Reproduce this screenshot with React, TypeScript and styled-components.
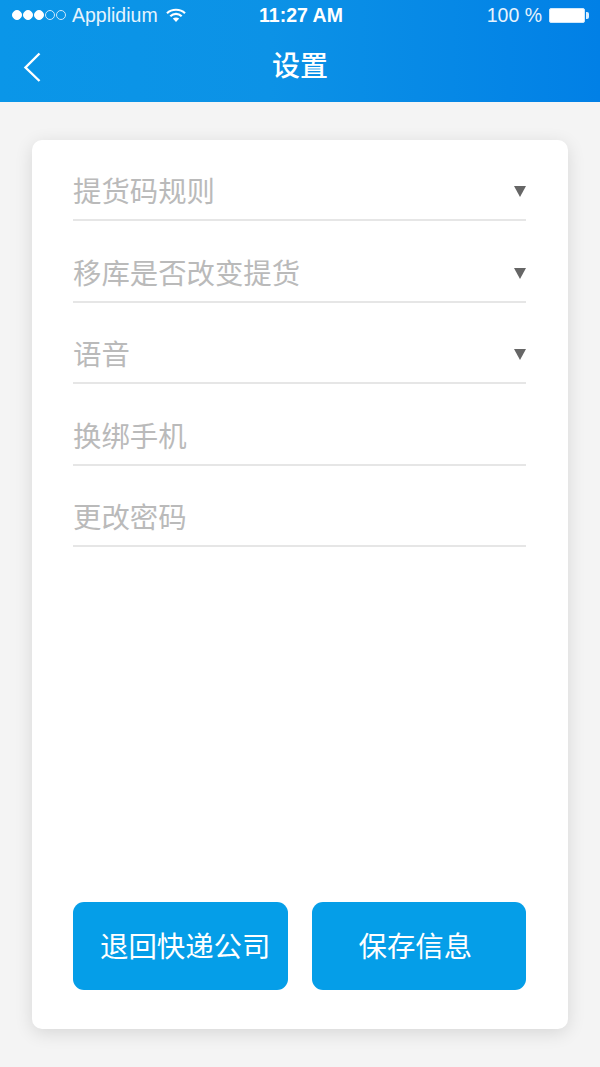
import styled, { createGlobalStyle } from "styled-components";

const GlobalStyle = createGlobalStyle`
  html, body {
    margin: 0;
    padding: 0;
    background: #f4f4f4;
  }
  * {
    box-sizing: border-box;
  }
`;

const fields = [
  { label: "提货码规则", select: true },
  { label: "移库是否改变提货", select: true },
  { label: "语音", select: true },
  { label: "换绑手机", select: false },
  { label: "更改密码", select: false },
];

const App = () => {
  return (
    <>
      <GlobalStyle />
      <Page>
        <Header>
          <StatusBar>
            <StatusLeft>
              <Dots>
                {[true, true, true, false, false].map((on, i) => (
                  <Dot key={i} $on={on} />
                ))}
              </Dots>
              <span>Applidium</span>
              <svg width="20" height="14" viewBox="0 0 20 14" fill="none" stroke="#fff">
                <path d="M1 5.2 C5.8 0.6 14.2 0.6 19 5.2" strokeWidth="2.2" />
                <path d="M4.3 8.2 C7.6 5 12.4 5 15.7 8.2" strokeWidth="2.2" />
                <path d="M10 14 L6.8 10.6 C8.6 9.2 11.4 9.2 13.2 10.6 Z" fill="#fff" stroke="none" />
              </svg>
            </StatusLeft>
            <Clock>11:27 AM</Clock>
            <StatusRight>
              <span>100 %</span>
              <Battery />
            </StatusRight>
          </StatusBar>
          <NavBar>
            <BackIcon width="18" height="30" viewBox="0 0 18 30" fill="none" stroke="#fff" strokeWidth="2.4">
              <path d="M16.5 1.5 L2.5 15.5 L16.5 29" />
            </BackIcon>
            <Title>设置</Title>
          </NavBar>
        </Header>
        <Card>
          <FieldList>
            {fields.map((f) => (
              <Field key={f.label}>
                <FieldLabel>{f.label}</FieldLabel>
                {f.select && <Caret />}
              </Field>
            ))}
          </FieldList>
          <Actions>
            <ActionButton $inset={27}>退回快递公司</ActionButton>
            <ActionButton $inset={47}>保存信息</ActionButton>
          </Actions>
        </Card>
      </Page>
    </>
  );
};

const cjk = `"Noto Sans CJK SC", "Noto Sans", sans-serif`;

const Page = styled.div`
  width: 600px;
  height: 1067px;
  overflow: hidden;
  background: #f4f4f4;
  display: flex;
  flex-direction: column;
`;

const Header = styled.header`
  height: 102px;
  background: linear-gradient(90deg, #0a96e8 0%, #0c92e6 45%, #0180e6 100%);
  color: #fff;
`;

const StatusBar = styled.div`
  height: 30px;
  padding: 0 12px;
  display: grid;
  grid-template-columns: 1fr auto 1fr;
  align-items: center;
  font-family: "Liberation Sans", Arial, sans-serif;
  font-size: 19.5px;
  color: #e6f3fd;
`;

const StatusLeft = styled.div`
  display: flex;
  align-items: center;
  gap: 6px;

  svg {
    margin-left: 2px;
  }
`;

const Dots = styled.div`
  display: flex;
  gap: 1px;
`;

const Dot = styled.i<{ $on: boolean }>`
  width: 10px;
  height: 10px;
  border-radius: 50%;
  border: 1px solid ${(p) => (p.$on ? "#fff" : "#cfe8fb")};
  background: ${(p) => (p.$on ? "#fff" : "transparent")};
`;

const Clock = styled.div`
  font-weight: 700;
  color: #fff;
  font-size: 19.5px;
  margin-left: 2px;
`;

const StatusRight = styled.div`
  display: flex;
  justify-content: flex-end;
  align-items: center;
  gap: 7px;
`;

const Battery = styled.div`
  position: relative;
  width: 36px;
  height: 15px;
  background: #fff;
  border: 1px solid #cfe8fb;
  border-radius: 2px;
  margin-right: 3px;

  &::after {
    content: "";
    position: absolute;
    right: -5px;
    top: 3px;
    width: 3px;
    height: 7px;
    background: #dcefff;
    border-radius: 0 2px 2px 0;
  }
`;

const NavBar = styled.div`
  position: relative;
  height: 72px;
  display: flex;
  align-items: center;
  justify-content: center;
  padding-bottom: 4px;
`;

const BackIcon = styled.svg`
  position: absolute;
  left: 23px;
  top: 22px;
`;

const Title = styled.h1`
  margin: 0;
  font-family: ${cjk};
  font-size: 28px;
  font-weight: 500;
  line-height: 1;
`;

const Card = styled.main`
  width: 536px;
  height: 889px;
  margin: 38px 0 0 32px;
  padding: 0 42px 39px 41px;
  background: #fff;
  border-radius: 10px;
  box-shadow: 0 4px 18px rgba(0, 0, 0, 0.12);
  display: flex;
  flex-direction: column;
  justify-content: space-between;
`;

const FieldList = styled.div`
  display: flex;
  flex-direction: column;
`;

const Field = styled.div`
  height: 81.5px;
  border-bottom: 2px solid #e6e6e6;
  display: flex;
  align-items: flex-end;
  justify-content: space-between;
  padding-bottom: 9px;

  &:first-child {
    height: 81px;
  }
`;

const FieldLabel = styled.span`
  font-family: ${cjk};
  font-size: 28.4px;
  font-weight: 400;
  line-height: 40px;
  color: #bababa;
`;

const Caret = styled.i`
  width: 0;
  height: 0;
  border-left: 6px solid transparent;
  border-right: 6px solid transparent;
  border-top: 11px solid #666;
  margin-bottom: 13px;
`;

const Actions = styled.div`
  display: grid;
  grid-template-columns: 1fr 1fr;
  gap: 24px;
`;

const ActionButton = styled.button<{ $inset: number }>`
  height: 88px;
  border: 0;
  border-radius: 11px;
  background: #059ee8;
  color: #fff;
  font-family: ${cjk};
  font-size: 28.4px;
  font-weight: 400;
  text-align: left;
  padding: 0 0 4px ${(p) => p.$inset}px;
`;

export default App;
